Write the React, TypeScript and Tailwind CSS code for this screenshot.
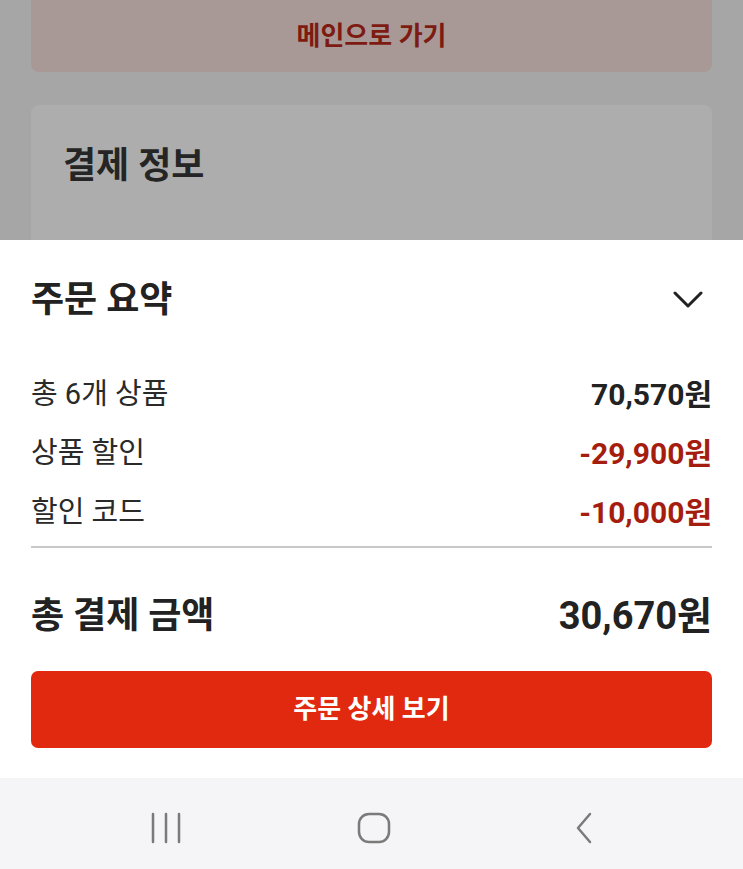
import React from "react";

const font = { fontFamily: 'Roboto, "Noto Sans CJK KR", "Noto Sans", sans-serif' };

function Row({ label, value, red }: { label: string; value: string; red?: boolean }) {
  return (
    <div className="flex h-[59px] items-center justify-between">
      <span className="text-[29px] text-[#2a2a2a]">{label}</span>
      <span className={"text-[30px] font-bold " + (red ? "text-[#a51d0e]" : "text-[#222222]")}>{value}</span>
    </div>
  );
}

export default function App() {
  return (
    <div className="relative flex h-[869px] w-[743px] flex-col overflow-hidden bg-[#a6a6a6]" style={font}>
      {/* dimmed background content */}
      <div className="flex h-[240px] flex-col px-[31px]">
        <div className="flex h-[72px] items-center justify-center rounded-b-[8px] bg-[#a99996]">
          <span className="text-[26px] font-bold text-[#7d1b12]">메인으로 가기</span>
        </div>
        <div className="mt-[33px] flex-1 rounded-t-[8px] bg-[#adadad] px-[32px] pt-[39px]">
          <span className="text-[36px] font-bold leading-[44px] text-[#252525]">결제 정보</span>
        </div>
      </div>

      {/* bottom sheet */}
      <div className="flex h-[538px] flex-col bg-white px-[31px]">
        <div className="flex h-[116px] items-center justify-between pt-[3px]">
          <span className="text-[36px] font-bold text-[#222222]">주문 요약</span>
          <svg width="30" height="20" viewBox="0 0 30 20" className="mr-[9px]">
            <path d="M2 3 L15 16 L28 3" fill="none" stroke="#222" strokeWidth="3" strokeLinecap="round" strokeLinejoin="round" />
          </svg>
        </div>
        <div className="pt-[9px]">
          <Row label="총 6개 상품" value="70,570원" />
          <Row label="상품 할인" value="-29,900원" red />
          <Row label="할인 코드" value="-10,000원" red />
        </div>
        <div className="mt-[4px] h-[2px] bg-[#c8c8c8]" />
        <div className="mt-[27px] flex h-[80px] items-center justify-between pt-[2px]">
          <span className="text-[36px] font-bold text-[#222222]">총 결제 금액</span>
          <span className="text-[38px] font-bold text-[#222222]">30,670원</span>
        </div>
        <button className="mt-[16px] flex h-[77px] items-center justify-center rounded-[7px] bg-[#e1290f]">
          <span className="text-[26px] font-bold text-white">주문 상세 보기</span>
        </button>
      </div>

      {/* navigation bar */}
      <div className="flex flex-1 items-center justify-center gap-[174px] bg-[#f5f5f7] pl-[5px] pt-[9px]">
        <svg width="34" height="34" viewBox="0 0 34 34">
          <path d="M4 3 V31 M17 3 V31 M30 3 V31" stroke="#7a7a7a" strokeWidth="2.5" strokeLinecap="round" />
        </svg>
        <svg width="34" height="34" viewBox="0 0 34 34">
          <rect x="2" y="3" width="30" height="28" rx="10" fill="none" stroke="#7a7a7a" strokeWidth="2.5" />
        </svg>
        <svg width="34" height="34" viewBox="0 0 34 34">
          <path d="M25 3 L13 17 L25 31" fill="none" stroke="#7a7a7a" strokeWidth="2.5" strokeLinecap="round" strokeLinejoin="round" />
        </svg>
      </div>
    </div>
  );
}
